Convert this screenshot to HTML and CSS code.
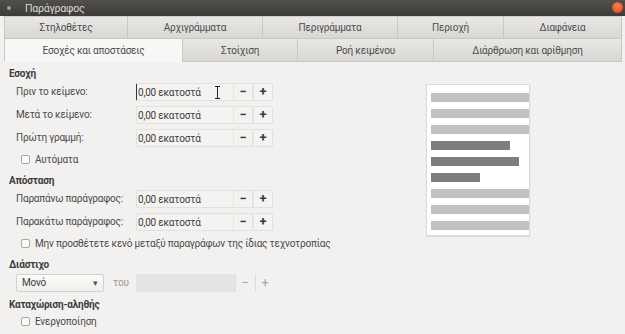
FILE: index.html
```html
<!DOCTYPE html>
<html lang="el">
<head>
    <meta charset="UTF-8">
    <title>Παράγραφος</title>
    <link rel="stylesheet" href="styles.css">
</head>
<body>
    <!-- Title bar -->
    <div class="titlebar">
        <span class="title-dot"></span>
        <span class="title">Παράγραφος</span>
        <span class="close"></span>
    </div>

    <!-- Tabs -->
    <div class="tabs">
        <div class="tab-row">
            <div class="tab" style="width:123px">Στηλοθέτες</div>
            <div class="tab" style="width:135px">Αρχιγράμματα</div>
            <div class="tab" style="width:135px">Περιγράμματα</div>
            <div class="tab" style="width:106px">Περιοχή</div>
            <div class="tab tab-last">Διαφάνεια</div>
        </div>
        <div class="tab-row">
            <div class="tab active" style="width:178px">Εσοχές και αποστάσεις</div>
            <div class="tab" style="width:115px">Στοίχιση</div>
            <div class="tab" style="width:136px">Ροή κειμένου</div>
            <div class="tab tab-last">Διάρθρωση και αρίθμηση</div>
        </div>
    </div>

    <!-- Content -->
    <div class="content">
        <div class="form">
            <div class="group-title">Εσοχή</div>
            <div class="row">
                <span class="label">Πριν το κείμενο:</span>
                <div class="spin">
                    <div class="spin-input focused">0,00 εκατοστά
                        <svg class="ibeam" width="7" height="13" viewBox="0 0 7 13">
                            <path d="M1 0.5h5M1 12.5h5M3.5 0.5v12" stroke="#222" stroke-width="1" fill="none"/>
                        </svg>
                    </div>
                    <div class="spin-btn">−</div>
                    <div class="spin-btn">+</div>
                </div>
            </div>
            <div class="row">
                <span class="label">Μετά το κείμενο:</span>
                <div class="spin">
                    <div class="spin-input">0,00 εκατοστά</div>
                    <div class="spin-btn">−</div>
                    <div class="spin-btn">+</div>
                </div>
            </div>
            <div class="row">
                <span class="label">Πρώτη γραμμή:</span>
                <div class="spin">
                    <div class="spin-input">0,00 εκατοστά</div>
                    <div class="spin-btn">−</div>
                    <div class="spin-btn">+</div>
                </div>
            </div>
            <div class="check-row">
                <span class="checkbox"></span>
                <span>Αυτόματα</span>
            </div>

            <div class="group-title">Απόσταση</div>
            <div class="row">
                <span class="label">Παραπάνω παράγραφος:</span>
                <div class="spin">
                    <div class="spin-input">0,00 εκατοστά</div>
                    <div class="spin-btn">−</div>
                    <div class="spin-btn">+</div>
                </div>
            </div>
            <div class="row">
                <span class="label">Παρακάτω παράγραφος:</span>
                <div class="spin">
                    <div class="spin-input">0,00 εκατοστά</div>
                    <div class="spin-btn">−</div>
                    <div class="spin-btn">+</div>
                </div>
            </div>
            <div class="check-row">
                <span class="checkbox"></span>
                <span>Μην προσθέτετε κενό μεταξύ παραγράφων της ίδιας τεχνοτροπίας</span>
            </div>

            <div class="group-title">Διάστιχο</div>
            <div class="row">
                <div class="select">
                    <span>Μονό</span>
                    <span class="arrow">▾</span>
                </div>
                <span class="of">του</span>
                <div class="spin disabled">
                    <div class="spin-input"></div>
                    <div class="spin-btn">−</div>
                    <div class="spin-btn">+</div>
                </div>
            </div>

            <div class="group-title">Καταχώριση-αληθής</div>
            <div class="check-row">
                <span class="checkbox"></span>
                <span>Ενεργοποίηση</span>
            </div>
        </div>

        <!-- Preview -->
        <div class="preview">
            <div class="bar"></div>
            <div class="bar"></div>
            <div class="bar"></div>
            <div class="bar dark" style="width:79px"></div>
            <div class="bar dark" style="width:88px"></div>
            <div class="bar dark" style="width:49px"></div>
            <div class="bar"></div>
            <div class="bar"></div>
            <div class="bar"></div>
        </div>
    </div>
</body>
</html>
```

FILE: styles.css
```css
/* ====== Base ====== */
body {
    margin: 0;
    width: 625px;
    height: 334px;
    overflow: hidden;
    background: #f2f1f0;
    font-family: Roboto, "Open Sans", sans-serif;
    font-size: 10px;
    letter-spacing: -0.2px;
    color: #3c3c3c;
}

/* ====== Title bar ====== */
.titlebar {
    height: 16px;
    background: linear-gradient(#504f4a, #3c3b37);
    display: flex;
    align-items: center;
    position: relative;
}
.title-dot {
    width: 4px;
    height: 4px;
    border-radius: 50%;
    background: #9d9b95;
    margin-left: 7px;
}
.title {
    margin-left: 14px;
    color: #dfdbd2;
    font-size: 10.5px;
}
.close {
    position: absolute;
    right: 2px;
    top: 2px;
    width: 11px;
    height: 11px;
    border-radius: 50%;
    background: radial-gradient(circle at 50% 40%, #f58a5f, #e3511f 70%, #b93d14);
}

/* ====== Tabs ====== */
.tabs {
    padding: 0 3px 0 4px;
}
.tab-row {
    display: flex;
    height: 23px;
}
.tab {
    box-sizing: border-box;
    display: flex;
    align-items: center;
    justify-content: center;
    background: linear-gradient(#e9e8e6, #d8d7d4);
    border-left: 1px solid #c9c7c2;
    border-bottom: 1px solid #c9c7c2;
    color: #4c4c4c;
}
.tab-row:first-child .tab {
    border-top: 1px solid #d0cec9;
}
.tab-last {
    flex: 1;
    border-right: 1px solid #c9c7c2;
}
.tab.active {
    background: #f7f7f6;
    border-bottom-color: transparent;
}

/* ====== Content ====== */
.content {
    display: flex;
    padding-top: 1px;
}
.form {
    width: 426px;
    flex: none;
}
.group-title {
    margin-top: 5px;
    padding-left: 9px;
    line-height: 12px;
    font-weight: 700;
    color: #3c3c3c;
}
.row {
    display: flex;
    align-items: center;
    height: 23px;
    padding-left: 16px;
}
.label {
    width: 120px;
    white-space: nowrap;
    color: #4a4a4a;
}
.spin {
    display: flex;
    height: 18px;
}
.spin-input {
    position: relative;
    box-sizing: border-box;
    width: 97px;
    height: 18px;
    padding-left: 1px;
    line-height: 17px;
    background: #f4f3f2;
    border: 1px solid #e3e1dd;
    border-right: none;
    border-radius: 2px 0 0 2px;
    color: #3c3c3c;
}
.spin-input.focused {
    border-left: 1px solid #333;
}
.ibeam {
    position: absolute;
    left: 77px;
    top: 2px;
}
.spin-btn {
    box-sizing: border-box;
    width: 20px;
    height: 18px;
    display: flex;
    align-items: center;
    justify-content: center;
    border: 1px solid #e3e1dd;
    border-left: 1px solid #e8e6e2;
    background: #f4f3f2;
    font-size: 13px;
    font-weight: 700;
    color: #3c3c3c;
}
.spin-btn:last-child {
    border-radius: 0 2px 2px 0;
}
.spin.disabled .spin-input {
    width: 99px;
    background: #e5e4e2;
    border-color: #e5e4e2;
}
.spin.disabled .spin-btn {
    background: transparent;
    border-color: transparent;
    border-left-color: #dedcd8;
    color: #a7a6a3;
    font-weight: 400;
}

/* ====== Checkboxes ====== */
.check-row {
    display: flex;
    align-items: center;
    height: 21px;
    padding-left: 21px;
    color: #4a4a4a;
}
.checkbox {
    box-sizing: border-box;
    width: 9px;
    height: 9px;
    border: 1px solid #a9a7a2;
    border-radius: 2px;
    background: #fbfbfa;
    margin-right: 5px;
}

/* ====== Select ====== */
.select {
    box-sizing: border-box;
    width: 88px;
    height: 18px;
    display: flex;
    align-items: center;
    justify-content: space-between;
    padding: 0 5px;
    background: linear-gradient(#fbfbfa, #f0efed);
    border: 1px solid #d3d1cc;
    border-radius: 2px;
}
.arrow {
    font-size: 9px;
    color: #555;
}
.of {
    box-sizing: border-box;
    width: 32px;
    padding-left: 9px;
    color: #9a9894;
}

/* ====== Preview ====== */
.preview {
    box-sizing: border-box;
    width: 104px;
    height: 152px;
    margin-top: 21px;
    padding: 8px 2px 0 4px;
    background: #fff;
    border: 1px solid #dcdad6;
    box-shadow: 0 1px 1px rgba(0,0,0,0.08);
    display: flex;
    flex-direction: column;
    gap: 7px;
}
.bar {
    width: 98px;
    height: 9px;
    background: #c2c2c2;
}
.bar.dark {
    background: #7e7e7e;
}
```
